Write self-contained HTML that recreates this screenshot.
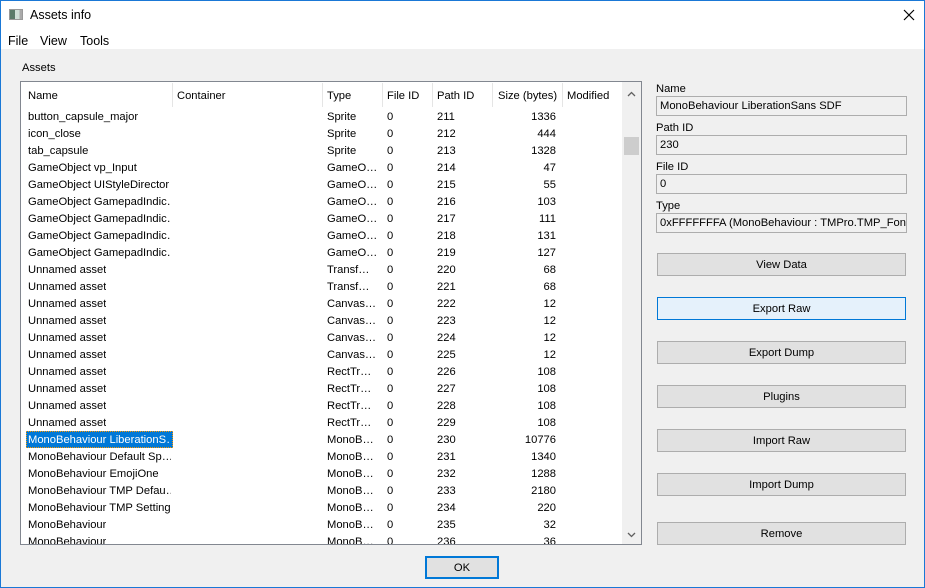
<!DOCTYPE html>
<html><head><meta charset="utf-8"><style>
*{margin:0;padding:0;box-sizing:border-box}
body{width:925px;height:588px;overflow:hidden;background:#f0f0f0;font-family:"Liberation Sans",sans-serif;font-size:11.2px;color:#000;position:relative}
.win{position:absolute;left:0;top:0;width:925px;height:588px;border:1px solid #1a78d6}
.title{position:absolute;left:1px;top:1px;width:923px;height:48px;background:#fff}
.a{position:absolute;white-space:nowrap}
.tbl{position:absolute;left:20px;top:81px;width:622px;height:464px;border:1px solid #828790;background:#fff;overflow:hidden}
.sep{position:absolute;top:1px;width:1px;height:24px;background:#e5e5e5}
.r{position:absolute;left:0;height:17px;width:600px}
.r span{position:absolute;top:3px;white-space:nowrap}
.lbl{position:absolute;left:656px}
.fld{position:absolute;left:656px;width:251px;height:20px;border:1px solid #adadad;background:#f0f0f0;padding:3px 0 0 3px;white-space:nowrap;overflow:hidden}
.btn{position:absolute;left:657px;width:249px;height:23px;border:1px solid #adadad;background:#e1e1e1;text-align:center;line-height:22px}
</style></head><body>
<div class="win"></div>
<div class="title"></div>
<div class="a" style="left:9px;top:9px;width:14px;height:11px;border:1px solid #999;background:linear-gradient(90deg,#5a7c6a 0 40%,#cfe0d8 40% 80%,#aaa 80%)"></div>
<div class="a" style="left:30px;top:8px;font-size:12.5px">Assets info</div>
<svg class="a" style="left:903px;top:9px" width="12" height="12"><path d="M1 1L11 11M11 1L1 11" stroke="#000" stroke-width="1.2"/></svg>
<div class="a" style="left:8px;top:34px;font-size:12.5px">File</div>
<div class="a" style="left:40px;top:34px;font-size:12.5px">View</div>
<div class="a" style="left:80px;top:34px;font-size:12.5px">Tools</div>
<div class="a" style="left:22px;top:62px">Assets</div>
<div class="tbl">
<div class="a" style="left:7px;top:8px">Name</div>
<div class="a" style="left:156px;top:8px">Container</div>
<div class="a" style="left:306px;top:8px">Type</div>
<div class="a" style="left:366px;top:8px">File ID</div>
<div class="a" style="left:416px;top:8px">Path ID</div>
<div class="a" style="left:477px;top:8px">Size (bytes)</div>
<div class="a" style="left:546px;top:8px">Modified</div>
<div class="sep" style="left:151px"></div><div class="sep" style="left:301px"></div><div class="sep" style="left:361px"></div><div class="sep" style="left:411px"></div><div class="sep" style="left:471px"></div><div class="sep" style="left:541px"></div><div class="sep" style="left:601px"></div>
<div class="a" style="left:601px;top:0;width:19px;height:462px;background:#f0f0f0"></div>
<svg class="a" style="left:606px;top:9px" width="9" height="6"><path d="M1 5L4.5 1.5L8 5" stroke="#606060" fill="none" stroke-width="1.3"/></svg>
<svg class="a" style="left:606px;top:450px" width="9" height="6"><path d="M1 1L4.5 4.5L8 1" stroke="#606060" fill="none" stroke-width="1.3"/></svg>
<div class="a" style="left:603px;top:55px;width:15px;height:18px;background:#cdcdcd"></div>
<div id="rows"></div>
</div>
<div class="lbl" style="top:83px">Name</div>
<div class="fld" style="top:96px">MonoBehaviour LiberationSans SDF</div>
<div class="lbl" style="top:122px">Path ID</div>
<div class="fld" style="top:135px">230</div>
<div class="lbl" style="top:161px">File ID</div>
<div class="fld" style="top:174px">0</div>
<div class="lbl" style="top:200px">Type</div>
<div class="fld" style="top:213px">0xFFFFFFFA (MonoBehaviour : TMPro.TMP_FontAsset)</div>
<div class="btn" style="top:253px">View Data</div>
<div class="btn" style="top:297px;border-color:#0078d7;background:#e5f1fb">Export Raw</div>
<div class="btn" style="top:341px">Export Dump</div>
<div class="btn" style="top:385px">Plugins</div>
<div class="btn" style="top:429px">Import Raw</div>
<div class="btn" style="top:473px">Import Dump</div>
<div class="btn" style="top:522px">Remove</div>
<div class="a" style="left:425px;top:556px;width:74px;height:23px;border:2px solid #0078d7;background:#e1e1e1;text-align:center;line-height:20px">OK</div>
<script>
var d=[["button_capsule_major","Sprite",211,1336],["icon_close","Sprite",212,444],["tab_capsule","Sprite",213,1328],["GameObject vp_Input","GameO…",214,47],["GameObject UIStyleDirector","GameO…",215,55],["GameObject GamepadIndic…","GameO…",216,103],["GameObject GamepadIndic…","GameO…",217,111],["GameObject GamepadIndic…","GameO…",218,131],["GameObject GamepadIndic…","GameO…",219,127],["Unnamed asset","Transf…",220,68],["Unnamed asset","Transf…",221,68],["Unnamed asset","Canvas…",222,12],["Unnamed asset","Canvas…",223,12],["Unnamed asset","Canvas…",224,12],["Unnamed asset","Canvas…",225,12],["Unnamed asset","RectTr…",226,108],["Unnamed asset","RectTr…",227,108],["Unnamed asset","RectTr…",228,108],["Unnamed asset","RectTr…",229,108],["MonoBehaviour LiberationS…","MonoB…",230,10776],["MonoBehaviour Default Sp…","MonoB…",231,1340],["MonoBehaviour EmojiOne","MonoB…",232,1288],["MonoBehaviour TMP Defau…","MonoB…",233,2180],["MonoBehaviour TMP Settings","MonoB…",234,220],["MonoBehaviour","MonoB…",235,32],["MonoBehaviour","MonoB…",236,36]];
var h="";d.forEach(function(r,i){var t=26+i*17;var sel=i==19;h+='<div class="r" style="top:'+t+'px">'+(sel?'<div style="position:absolute;left:5px;top:0;width:147px;height:17px;background:#0078d7;outline:1px dotted #f90;outline-offset:-1px"></div>':'')+'<span style="left:7px;'+(sel?'color:#fff;':'')+'max-width:143px;overflow:hidden">'+r[0]+'</span><span style="left:306px">'+r[1]+'</span><span style="left:366px">0</span><span style="left:416px">'+r[2]+'</span><span style="right:65px">'+r[3]+'</span></div>';});
document.getElementById("rows").innerHTML=h;
</script>
</body></html>
